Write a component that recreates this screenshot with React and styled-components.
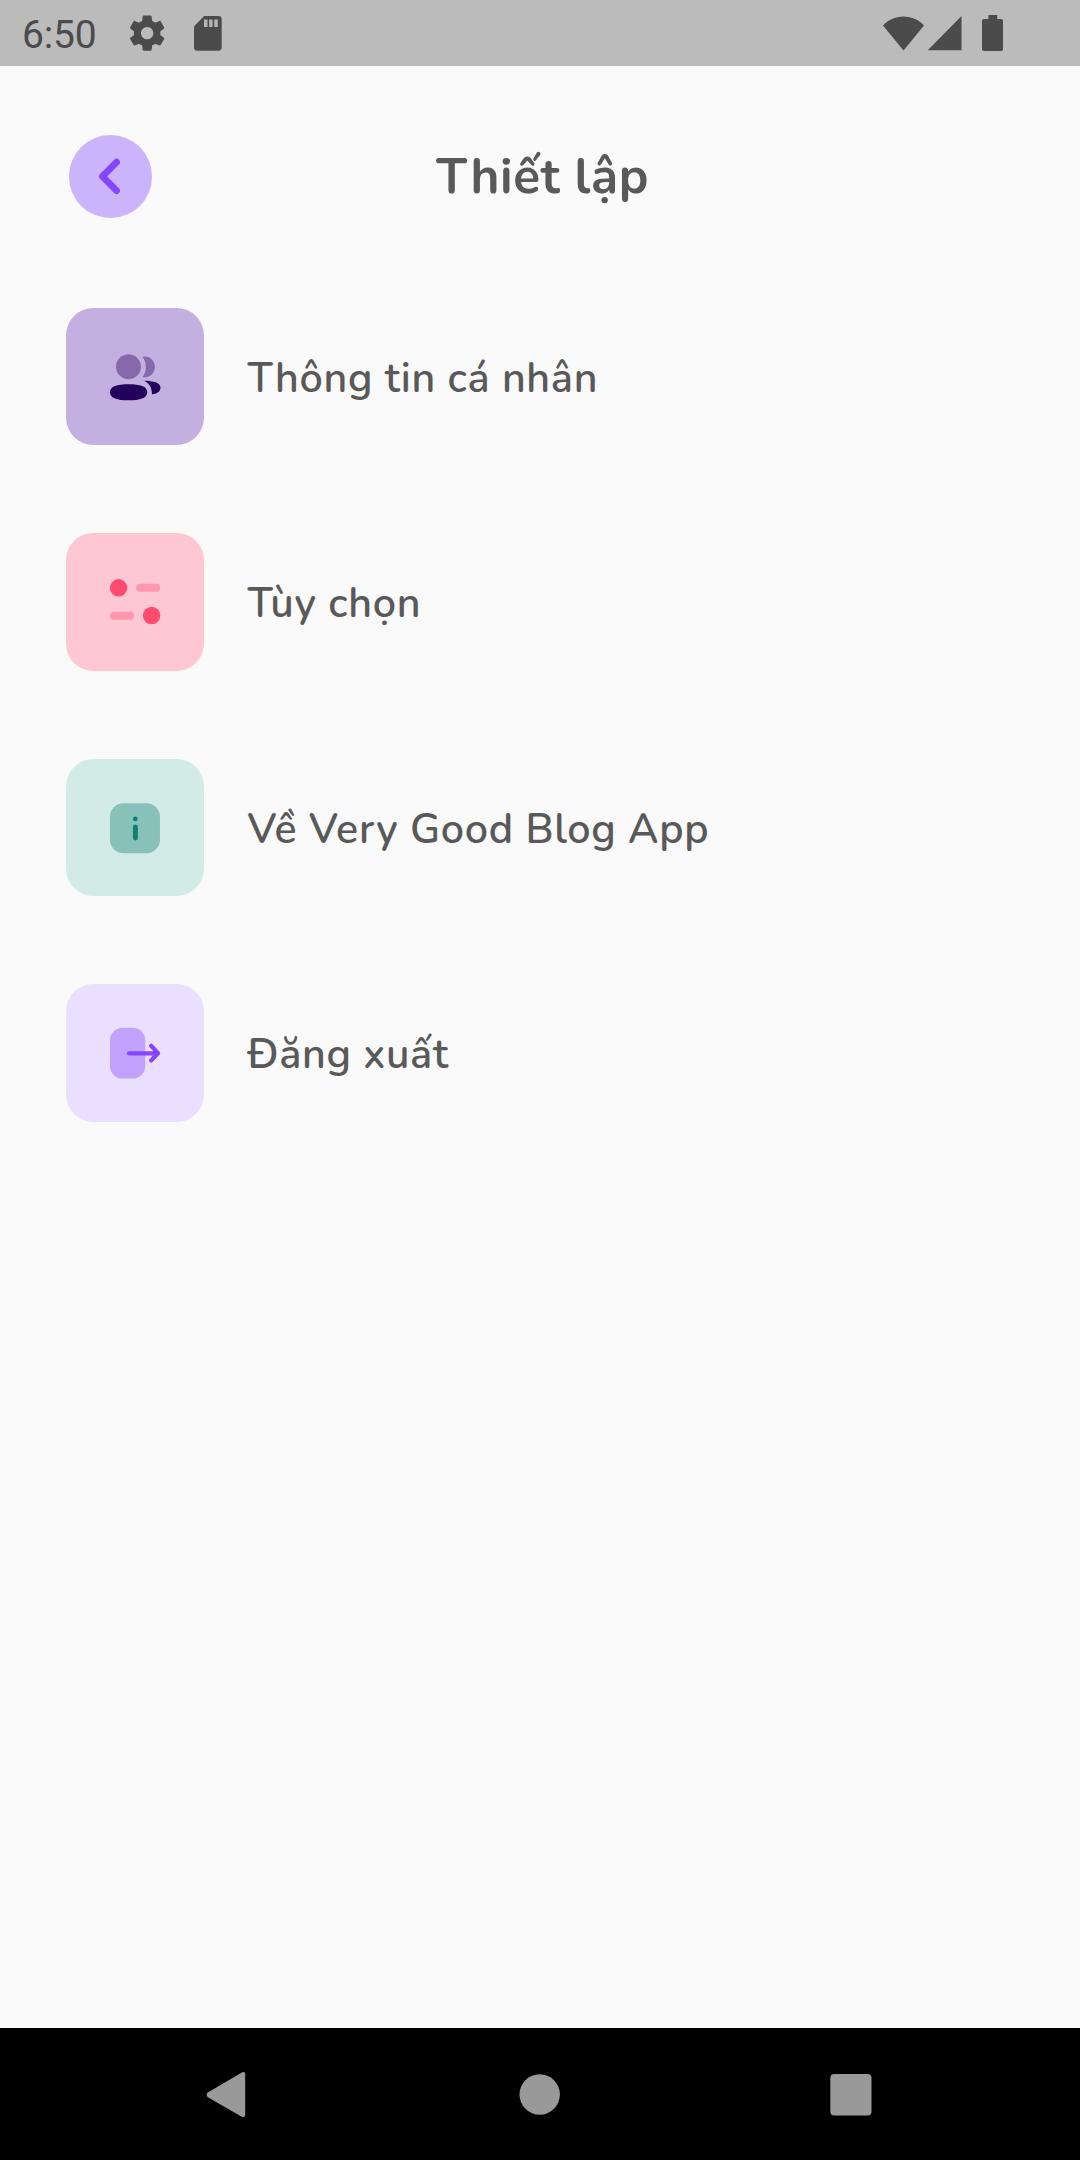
import React from 'react';
import styled, { createGlobalStyle } from 'styled-components';

const GlobalStyle = createGlobalStyle`
  * { box-sizing: border-box; }
  body { margin: 0; background: #fafafa; }
`;

const Screen = styled.div`
  display: flex;
  flex-direction: column;
  width: 1080px;
  height: 2160px;
  overflow: hidden;
  background: #fafafa;
  color: #595959;
  font-family: Nunito, Lato, 'Open Sans', sans-serif;
`;

const StatusBar = styled.header`
  display: flex;
  align-items: center;
  justify-content: space-between;
  flex: none;
  height: 66px;
  padding: 0 76px 0 22px;
  background: #bbbbbb;
  color: #4b4b4b;
`;

const StatusGroup = styled.div`
  display: flex;
  align-items: center;
`;

const Clock = styled.time`
  width: 103.5px;
  padding-top: 3px;
  font: 400 39px/46px Roboto, sans-serif;
  letter-spacing: -0.2px;
`;

const Glyph = styled.svg`
  display: block;
  flex: none;
  width: ${(p) => p.$w}px;
  height: ${(p) => p.$h}px;
  margin-left: ${(p) => p.$gap || 0}px;
`;

const TitleBar = styled.div`
  display: grid;
  grid-template-columns: 82.5px 1fr 82.5px;
  align-items: center;
  flex: none;
  margin-top: 69px;
  padding: 0 69px;
`;

const BackButton = styled.button`
  width: 82.5px;
  height: 82.5px;
  padding: 0;
  border: 0;
  border-radius: 50%;
  background: #cbb4fb;
`;

const Title = styled.h1`
  margin: 0;
  padding: 2px 0 0 5.5px;
  text-align: center;
  font-size: 49.5px;
  font-weight: 700;
  line-height: 68px;
  letter-spacing: 0.69px;
  white-space: nowrap;
`;

const Menu = styled.ul`
  display: flex;
  flex: 1;
  flex-direction: column;
  gap: 88px;
  margin: 90.25px 0 0;
  padding: 0 66px;
  list-style: none;
`;

const MenuItem = styled.li`
  display: flex;
  align-items: center;
  gap: 44px;
`;

const Tile = styled.span`
  display: grid;
  place-items: center;
  width: 137.5px;
  height: 137.5px;
  border-radius: 27.5px;
  background: ${(p) => p.$tint};
`;

const Label = styled.span`
  padding-top: 4px;
  font-size: 41.25px;
  font-weight: 600;
  line-height: 56px;
  letter-spacing: 0.69px;
  white-space: nowrap;
`;

const NavBar = styled.nav`
  display: flex;
  align-items: center;
  justify-content: space-between;
  flex: none;
  height: 132px;
  padding: 0 208px 0 206px;
  background: #000;
`;

const PeopleIcon = () => (
  <Glyph $w={66} $h={66} viewBox="0.3 0 66 66">
    <g fill="#8569ab">
      <circle cx="26.75" cy="22.75" r="12.5" />
      <path d="M40.8 12.7A10.4 10.4 0 1 1 40.8 33.1A17.2 17.2 0 0 0 40.8 12.7Z" />
    </g>
    <g fill="#24005d">
      <path d="M26.9 40.2C38.5 40.2 45.5 42.2 45.5 48.2S38.5 56.3 26.9 56.3S8.25 54.2 8.25 48.2S15.3 40.2 26.9 40.2Z" />
      <path d="M42.7 36.8C51.5 36.8 58.8 38.8 58.8 43.6C58.8 47.8 55 50.1 50.2 50.4C50.4 44.2 47.9 39.6 42.7 36.8Z" />
    </g>
  </Glyph>
);

const SlidersIcon = () => (
  <Glyph $w={66} $h={66} viewBox="0.3 0 66 66">
    <g fill="#ff98ae">
      <rect x="34.5" y="14.8" width="24" height="8" rx="4" />
      <rect x="8.25" y="42.8" width="24" height="8" rx="4" />
    </g>
    <g fill="#ff4b70">
      <circle cx="16.9" cy="18.8" r="8.7" />
      <circle cx="49.9" cy="46.5" r="8.7" />
    </g>
  </Glyph>
);

const InfoIcon = () => (
  <Glyph $w={66} $h={66} viewBox="0.3 0 66 66">
    <rect x="8.25" y="8.25" width="50" height="50" rx="13.5" fill="#88c0ba" />
    <g fill="#11806f">
      <circle cx="33.6" cy="23.9" r="2.4" />
      <rect x="31.25" y="29.5" width="4.9" height="16" rx="2.45" />
    </g>
  </Glyph>
);

const LogoutIcon = () => (
  <Glyph $w={66} $h={66} viewBox="0.3 0 66 66">
    <rect x="8.25" y="7.75" width="35.3" height="50.8" rx="12.5" fill="#c1a3ff" />
    <path
      d="M27.3 33.3H56.2M49.4 25.8L56.4 33.3L49.4 40.5"
      fill="none"
      stroke="#8447ff"
      strokeWidth="4.2"
      strokeLinecap="round"
      strokeLinejoin="round"
    />
  </Glyph>
);

const items = [
  { label: 'Thông tin cá nhân', tint: '#c3b0e1', Icon: PeopleIcon },
  { label: 'Tùy chọn', tint: '#ffc6d3', Icon: SlidersIcon },
  { label: 'Về Very Good Blog App', tint: '#d2ebe7', Icon: InfoIcon },
  { label: 'Đăng xuất', tint: '#eadfff', Icon: LogoutIcon },
];

export default function App() {
  return (
    <Screen>
      <GlobalStyle />
      <StatusBar>
        <StatusGroup>
          <Clock>6:50</Clock>
          <Glyph $w={42.3} $h={42.3} viewBox="0 0 24 24" fill="currentColor">
            <path d="M19.43 12.98c.04-.32.07-.64.07-.98s-.03-.66-.07-.98l2.11-1.65c.19-.15.24-.42.12-.64l-2-3.46c-.12-.22-.39-.3-.61-.22l-2.49 1c-.52-.4-1.08-.73-1.69-.98l-.38-2.65C14.46 2.18 14.25 2 14 2h-4c-.25 0-.46.18-.49.42l-.38 2.65c-.61.25-1.17.59-1.69.98l-2.49-1c-.23-.09-.49 0-.61.22l-2 3.46c-.13.22-.07.49.12.64l2.11 1.65c-.04.32-.07.65-.07.98s.03.66.07.98l-2.11 1.65c-.19.15-.24.42-.12.64l2 3.46c.12.22.39.3.61.22l2.49-1c.52.4 1.08.73 1.69.98l.38 2.65c.03.24.24.42.49.42h4c.25 0 .46-.18.49-.42l.38-2.65c.61-.25 1.17-.59 1.69-.98l2.49 1c.23.09.49 0 .61-.22l2-3.46c.12-.22.07-.49-.12-.64l-2.11-1.65zM12 15.5c-1.93 0-3.5-1.57-3.5-3.5s1.57-3.5 3.5-3.5 3.5 1.57 3.5 3.5-1.57 3.5-3.5 3.5z" />
          </Glyph>
          <Glyph $w={28} $h={35} $gap={26} viewBox="0 0 28 35">
            <path d="M10.2 0H24.3Q27.7 0 27.7 3.4V31.2Q27.7 34.7 24.3 34.7H3.4Q0 34.7 0 31.2V10.3Z" fill="currentColor" />
            <path d="M10 3.4h3.5v7.6H10ZM15.1 3.4h3.5v7.6h-3.5ZM20.2 3.4h3.6v7.6h-3.6Z" fill="#b5b5b5" />
          </Glyph>
        </StatusGroup>
        <StatusGroup>
          <Glyph $w={41} $h={35} viewBox="0 0 41 35" fill="currentColor">
            <path d="M0 9.5C5 4.2 12 .5 20.5 .5S36 4.2 41 9.5L20.5 34.5Z" />
          </Glyph>
          <Glyph $w={34} $h={35} $gap={4} viewBox="0.3 0.4 34 35" fill="currentColor">
            <path d="M33.8 .5V34.7H0Z" />
          </Glyph>
          <Glyph $w={22} $h={36} $gap={20} viewBox="0 0 22 36" fill="currentColor">
            <path d="M6.4 0h8.8v4H19.2Q21 4 21 6V34Q21 36 19.2 36H2Q0 36 0 34V6Q0 4 2 4H6.4Z" />
          </Glyph>
        </StatusGroup>
      </StatusBar>
      <TitleBar>
        <BackButton aria-label="Quay lại">
          <Glyph $w={82.5} $h={82.5} viewBox="0 0 82.5 82.5">
            <path
              d="M47.6 27.1L33.4 41.4L47.6 55.7"
              fill="none"
              stroke="#8447ff"
              strokeWidth="6.7"
              strokeLinecap="round"
              strokeLinejoin="round"
            />
          </Glyph>
        </BackButton>
        <Title>Thiết lập</Title>
      </TitleBar>
      <Menu>
        {items.map(({ label, tint, Icon }) => (
          <MenuItem key={label}>
            <Tile $tint={tint}>
              <Icon />
            </Tile>
            <Label>{label}</Label>
          </MenuItem>
        ))}
      </Menu>
      <NavBar>
        <Glyph $w={40} $h={46} viewBox="0 -.6 40 46" overflow="visible" fill="#999">
          <path d="M35.4 1.2Q39.2 -.8 39.2 3V43Q39.2 46.8 35.4 44.8L1.8 25.6Q-.6 23.2 1.8 20.8Z" />
        </Glyph>
        <Glyph $w={43} $h={41} viewBox="-2.2 0 43 41" overflow="visible" fill="#999">
          <circle cx="20.5" cy="20.5" r="20.2" />
        </Glyph>
        <Glyph $w={42} $h={42} viewBox="0 -.7 42 42" overflow="visible" fill="#999">
          <rect x=".3" y=".3" width="41.2" height="41.4" rx="4" />
        </Glyph>
      </NavBar>
    </Screen>
  );
}
